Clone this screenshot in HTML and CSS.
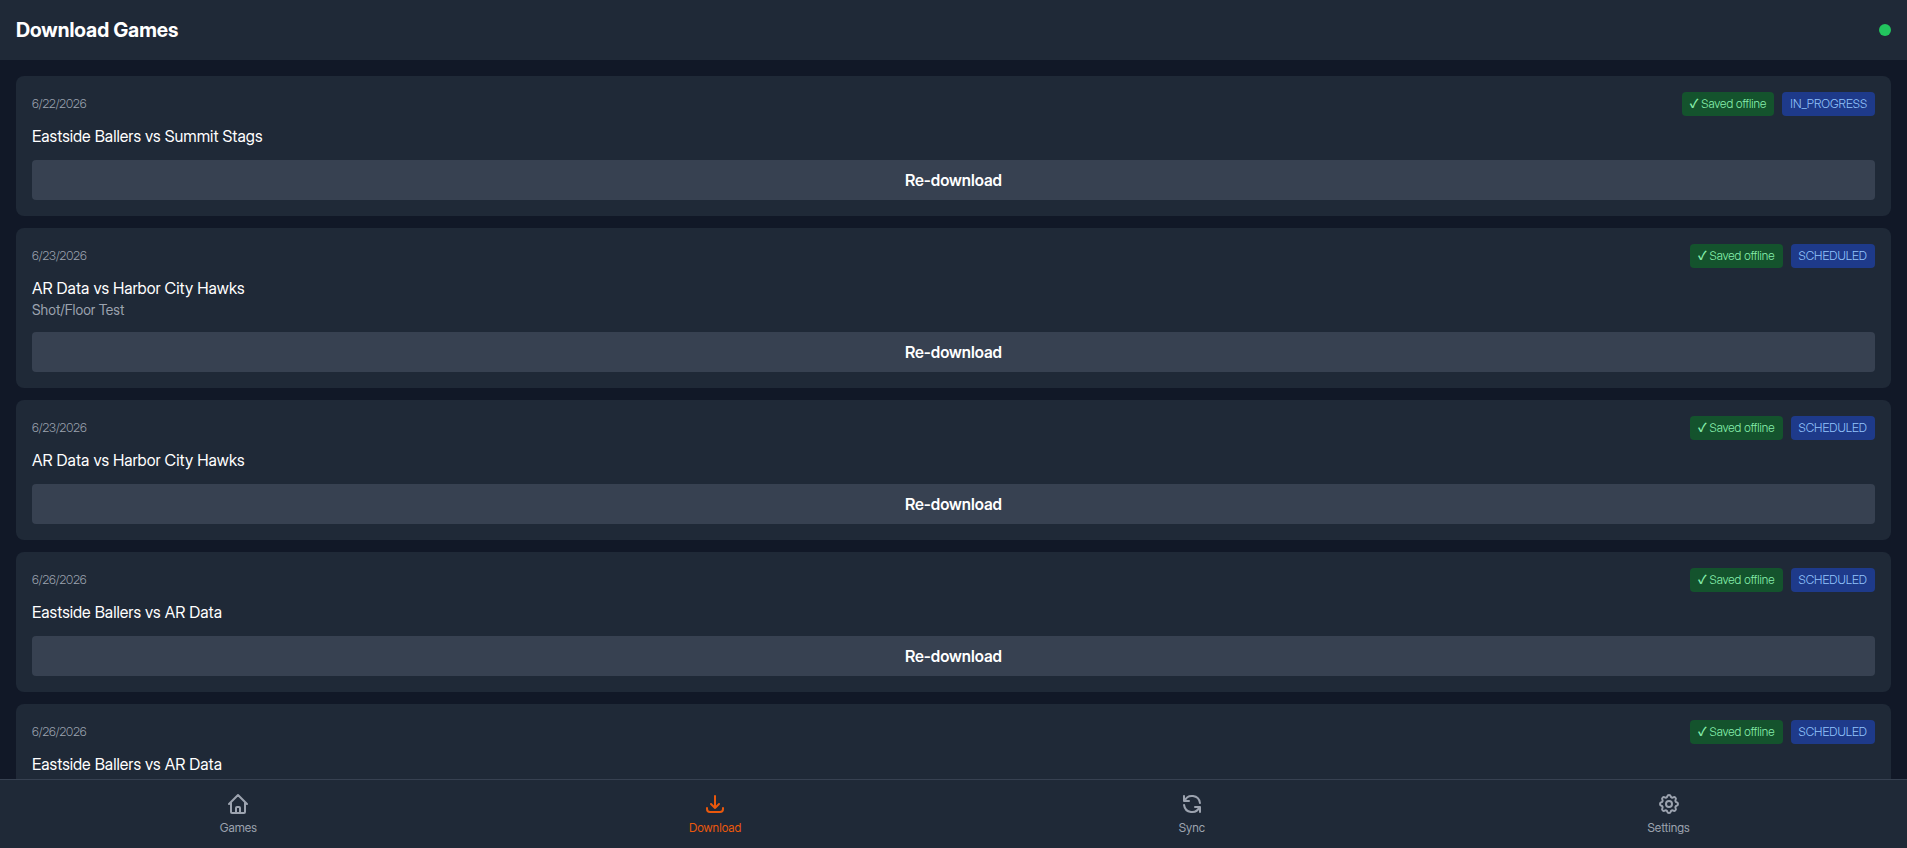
FILE: index.html
```html
<!DOCTYPE html>
<html lang="en">
	<head>
		<meta charset="utf-8">
		<meta name="viewport" content="width=device-width, initial-scale=1">
		<title>Download Games</title>
		<link rel="stylesheet" href="styles.css">
	</head>
	<body>
		<header class="header">
			<h1>Download Games</h1>
			<span class="online" role="img" aria-label="Online"></span>
		</header>

		<main class="games">
			<article class="card">
				<div class="card-top">
					<span class="date">6/22/2026</span>
					<div class="badges">
						<span class="badge saved"><span class="tick">✓</span> Saved offline</span>
						<span class="badge status">IN_PROGRESS</span>
					</div>
				</div>
				<h2>Eastside Ballers vs Summit Stags</h2>
				<button type="button" class="btn">Re-download</button>
			</article>

			<article class="card">
				<div class="card-top">
					<span class="date">6/23/2026</span>
					<div class="badges">
						<span class="badge saved"><span class="tick">✓</span> Saved offline</span>
						<span class="badge status">SCHEDULED</span>
					</div>
				</div>
				<h2>AR Data vs Harbor City Hawks</h2>
				<p class="note">Shot/Floor Test</p>
				<button type="button" class="btn">Re-download</button>
			</article>

			<article class="card">
				<div class="card-top">
					<span class="date">6/23/2026</span>
					<div class="badges">
						<span class="badge saved"><span class="tick">✓</span> Saved offline</span>
						<span class="badge status">SCHEDULED</span>
					</div>
				</div>
				<h2>AR Data vs Harbor City Hawks</h2>
				<button type="button" class="btn">Re-download</button>
			</article>

			<article class="card">
				<div class="card-top">
					<span class="date">6/26/2026</span>
					<div class="badges">
						<span class="badge saved"><span class="tick">✓</span> Saved offline</span>
						<span class="badge status">SCHEDULED</span>
					</div>
				</div>
				<h2>Eastside Ballers vs AR Data</h2>
				<button type="button" class="btn">Re-download</button>
			</article>

			<article class="card">
				<div class="card-top">
					<span class="date">6/26/2026</span>
					<div class="badges">
						<span class="badge saved"><span class="tick">✓</span> Saved offline</span>
						<span class="badge status">SCHEDULED</span>
					</div>
				</div>
				<h2>Eastside Ballers vs AR Data</h2>
				<button type="button" class="btn">Re-download</button>
			</article>
		</main>

		<nav class="tabs">
			<a href="#games">
				<svg viewBox="0 0 24 24" aria-hidden="true"><path d="M3 12l2-2m0 0l7-7 7 7M5 10v10a1 1 0 001 1h3m10-11l2 2m-2-2v10a1 1 0 01-1 1h-3m-6 0a1 1 0 001-1v-4a1 1 0 011-1h2a1 1 0 011 1v4a1 1 0 001 1m-6 0h6"/></svg>
				<span>Games</span>
			</a>
			<a href="#download" class="on" aria-current="page">
				<svg viewBox="0 0 24 24" aria-hidden="true"><path d="M4 16v1a3 3 0 003 3h10a3 3 0 003-3v-1m-4-4l-4 4m0 0l-4-4m4 4V4"/></svg>
				<span>Download</span>
			</a>
			<a href="#sync">
				<svg viewBox="0 0 24 24" aria-hidden="true"><path d="M4 4v5h.582m15.356 2A8.001 8.001 0 004.582 9m0 0H9m11 11v-5h-.581m0 0a8.003 8.003 0 01-15.357-2m15.357 2H15"/></svg>
				<span>Sync</span>
			</a>
			<a href="#settings">
				<svg viewBox="0 0 24 24" aria-hidden="true"><path d="M10.325 4.317c.426-1.756 2.924-1.756 3.35 0a1.724 1.724 0 002.573 1.066c1.543-.94 3.31.826 2.37 2.37a1.724 1.724 0 001.065 2.572c1.756.426 1.756 2.924 0 3.35a1.724 1.724 0 00-1.066 2.573c.94 1.543-.826 3.31-2.37 2.37a1.724 1.724 0 00-2.572 1.065c-.426 1.756-2.924 1.756-3.35 0a1.724 1.724 0 00-2.573-1.066c-1.543.94-3.31-.826-2.37-2.37a1.724 1.724 0 00-1.065-2.572c-1.756-.426-1.756-2.924 0-3.35a1.724 1.724 0 001.066-2.573c-.94-1.543.826-3.31 2.37-2.37.996.608 2.296.07 2.572-1.065z"/><path d="M15 12a3 3 0 11-6 0 3 3 0 016 0z"/></svg>
				<span>Settings</span>
			</a>
		</nav>
	</body>
</html>
```

FILE: styles.css
```css
*{
	margin: 0;
	padding: 0;
	box-sizing: border-box;
}
body{
	display: flex;
	flex-direction: column;
	height: 100vh;
	background: #111827;
	color: #fff;
	font-family: "Inter Display", "Inter Tight", Inter, sans-serif;
	font-variation-settings: "opsz" 32;
	font-size: 16px;
	line-height: 24px;
}

/* header */
.header{
	display: flex;
	align-items: center;
	justify-content: space-between;
	padding: 16px;
	background: #1f2937;
}
.header h1{
	font-size: 20px;
	line-height: 28px;
	font-weight: 700;
}
.online{
	width: 12px;
	height: 12px;
	border-radius: 50%;
	background: #22c55e;
}

/* game list */
.games{
	flex: 1;
	min-height: 0;
	padding: 16px;
	overflow-y: auto;
	scrollbar-width: none;
}
.card{
	padding: 16px;
	border-radius: 8px;
	background: #1f2937;
}
.card + .card{
	margin-top: 12px;
}
.card-top{
	display: flex;
	align-items: center;
	justify-content: space-between;
	margin-bottom: 8px;
	font-size: 12px;
	font-weight: 350;
	line-height: 16px;
}
.date{
	color: #9ca3af;
}
.badges{
	display: flex;
	gap: 8px;
}
.badge{
	padding: 4px 8px;
	border-radius: 4px;
}
.saved{
	background: #14532d;
	color: #86efac;
}
.tick{
	font-family: "Noto Sans CJK SC", sans-serif;
	font-weight: 700;
	line-height: 1;
}
.status{
	background: #1e3a8a;
	color: #93c5fd;
}
.card h2{
	font-size: 16px;
	font-weight: 400;
}
.note{
	color: #9ca3af;
	font-size: 14px;
	line-height: 20px;
}
.btn{
	display: block;
	width: 100%;
	margin-top: 12px;
	padding: 8px;
	border: 0;
	border-radius: 4px;
	background: #374151;
	color: #fff;
	font: inherit;
	font-variation-settings: inherit;
	font-weight: 600;
	cursor: pointer;
}

/* bottom tabs */
.tabs{
	display: flex;
	border-top: 1px solid #374151;
	background: #1f2937;
}
.tabs a{
	flex: 1;
	display: flex;
	flex-direction: column;
	align-items: center;
	gap: 4px;
	padding: 12px 0;
	color: #9ca3af;
	font-size: 12px;
	line-height: 16px;
	text-decoration: none;
}
.tabs .on{
	color: #ea580c;
}
.tabs svg{
	width: 24px;
	height: 24px;
	fill: none;
	stroke: currentColor;
	stroke-width: 2;
	stroke-linecap: round;
	stroke-linejoin: round;
}
```
